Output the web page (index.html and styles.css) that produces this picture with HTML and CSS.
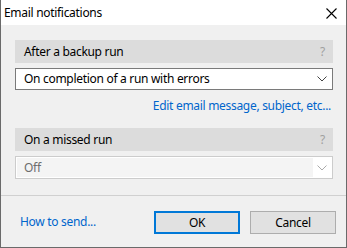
FILE: index.html
```html
<!DOCTYPE html>
<html>
<head>
<meta charset="utf-8">
<link rel="stylesheet" href="styles.css">
</head>
<body>
<div class="window">
  <div class="titlebar">
    <span class="title">Email notifications</span>
    <svg class="close" width="11" height="11" viewBox="0 0 11 11"><path d="M0.5 0.5L10.5 10.5M10.5 0.5L0.5 10.5" stroke="#000" stroke-width="1.1" fill="none"/></svg>
  </div>
  <div class="content">
    <div class="section-head"><span>After a backup run</span><span class="help">?</span></div>
    <div class="select">
      <span class="select-text">On completion of a run with errors</span>
      <span class="select-btn"><svg width="10" height="6" viewBox="0 0 10 6"><path d="M0.5 0.5L5 5L9.5 0.5" stroke="#444" stroke-width="1" fill="none"/></svg></span>
    </div>
    <div class="link-row"><a class="link">Edit email message, subject, etc...</a></div>
    <div class="section-head"><span>On a missed run</span><span class="help">?</span></div>
    <div class="select disabled">
      <span class="select-text">Off</span>
      <span class="select-btn"><svg width="10" height="6" viewBox="0 0 10 6"><path d="M0.5 0.5L5 5L9.5 0.5" stroke="#aaa" stroke-width="1" fill="none"/></svg></span>
    </div>
  </div>
  <div class="footer">
    <a class="link">How to send...</a>
    <div class="buttons">
      <button class="btn primary">OK</button>
      <button class="btn">Cancel</button>
    </div>
  </div>
</div>
</body>
</html>
```
FILE: styles.css
```css
* { box-sizing: border-box; }
html, body { margin: 0; padding: 0; }
body {
  font-family: "Noto Sans", "Open Sans", sans-serif;
  font-size: 12px;
  letter-spacing: -0.3px;
  color: #000;
  background: #f0f0f0;
}
.window {
  width: 347px;
  height: 248px;
  background: #f0f0f0;
  border: 1px solid #6a6a6a;
  border-top: none;
  display: flex;
  flex-direction: column;
}
.titlebar {
  height: 25px;
  background: #fff;
  display: flex;
  align-items: center;
  justify-content: space-between;
  padding: 0 9px 0 3px;
}
.title { font-size: 12px; line-height: 16px; }
.close { display: block; margin-top: 1px; }
.content {
  padding: 15px 13px 0 14px;
  display: flex;
  flex-direction: column;
}
.section-head {
  height: 23px;
  background: #dcdcdc;
  display: flex;
  align-items: center;
  justify-content: space-between;
  padding: 0 8px 0 9px;
  line-height: 16px;
}
.help { color: #a0a0a0; }
.select {
  margin-top: 5px;
  height: 22px;
  background: #fff;
  border: 1px solid #7a7a7a;
  display: flex;
  align-items: stretch;
}
.select-text {
  flex: 1;
  display: flex;
  align-items: center;
  padding-left: 8px;
  line-height: 16px;
}
.select-btn {
  width: 19px;
  display: flex;
  align-items: center;
  justify-content: center;
  padding-right: 2px;
}
.select.disabled {
  border-color: #cccccc;
  background: #fff;
  height: 23px;
}
.select.disabled .select-text {
  background: #f4f4f4;
  color: #6d6d6d;
  margin: 1px 0 1px 1px;
  padding-left: 7px;
}
.link-row {
  display: flex;
  justify-content: flex-end;
  padding-right: 2px;
  margin: 8px 0 14px;
  line-height: 16px;
}
.link { color: #0066cc; cursor: pointer; }
.footer {
  margin-top: 16px;
  border-top: 1px solid #d0d0d0;
  flex: 1;
  display: flex;
  align-items: center;
  justify-content: space-between;
  padding: 0 10px 0 19px;
  line-height: 16px;
}
.buttons { display: flex; gap: 10px; margin-top: 1px; }
.btn {
  width: 86px;
  height: 23px;
  background: #e1e1e1;
  border: 1px solid #adadad;
  font-family: inherit;
  font-size: 12px;
  letter-spacing: -0.3px;
  color: #000;
  padding: 0;
}
.btn.primary { border: 2px solid #0078d7; }
```
